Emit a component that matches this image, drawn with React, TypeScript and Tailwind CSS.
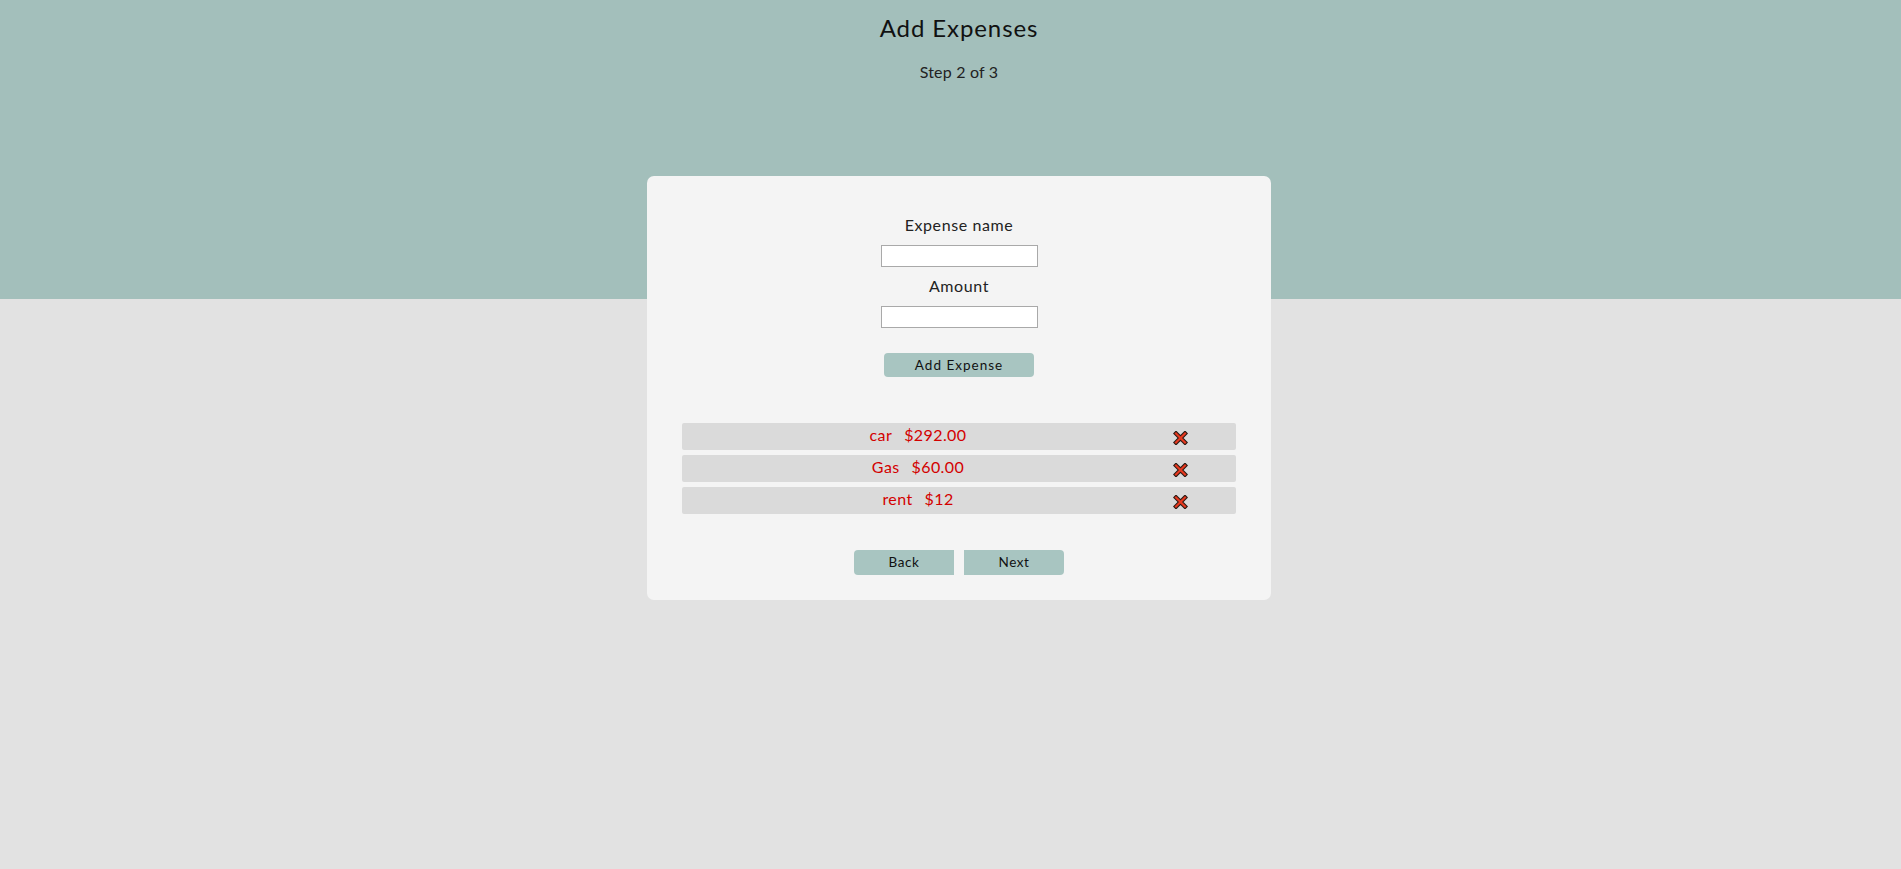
import React from "react";

const font = { fontFamily: '"Lato", "Noto Sans", sans-serif' };

function XIcon() {
  return (
    <svg width="15" height="14" viewBox="0 0 15 14" className="block">
      <g strokeLinecap="square">
        <path d="M3 2.5 L12 11.5 M12 2.5 L3 11.5" stroke="#2a1a14" strokeWidth="4.4" />
        <path d="M3 2.5 L12 11.5 M12 2.5 L3 11.5" stroke="#e8391f" strokeWidth="2.2" />
      </g>
    </svg>
  );
}

const expenses = [
  { name: "car", amount: "$292.00" },
  { name: "Gas", amount: "$60.00" },
  { name: "rent", amount: "$12" },
];

export default function App() {
  return (
    <div
      className="min-h-screen w-full bg-[linear-gradient(to_bottom,#a3bfbb_299px,#e2e2e2_299px)] pl-[17px] text-[#111]"
      style={font}
    >
      <div className="flex flex-col items-center">
        <h1 className="mt-[12px] text-[24px] leading-[32px] font-normal tracking-[0.9px] text-[#111]">Add Expenses</h1>
        <p className="mt-[16px] text-[16px] leading-[24px] tracking-[0.2px] text-[#222]">Step 2 of 3</p>

        <div className="mt-[92px] flex w-[624px] flex-col items-center rounded-[7px] bg-[#f4f4f4] pt-[37px] pb-[25px]">
          <label className="text-[16px] leading-[24px] tracking-[0.6px] text-[#222]">Expense name</label>
          <input
            type="text"
            className="mt-[8px] h-[22px] w-[157px] border border-[#a9a9a9] bg-white px-1 text-[13px] outline-none"
          />
          <label className="mt-[7px] text-[16px] leading-[24px] tracking-[0.6px] text-[#222]">Amount</label>
          <input
            type="text"
            className="mt-[8px] h-[22px] w-[157px] border border-[#a9a9a9] bg-white px-1 text-[13px] outline-none"
          />
          <button className="mt-[25px] h-[24px] w-[150px] rounded-[4px] bg-[#a8c5c1] text-[13.5px] leading-[24px] tracking-[1px] text-[#111]">
            Add Expense
          </button>

          <div className="mt-[46px] flex w-[554px] flex-col gap-[5px]">
            {expenses.map((e) => (
              <div key={e.name} className="flex h-[27px] items-center rounded-[2px] bg-[#dadada]">
                <div className="flex w-[472px] justify-center gap-[12px] pb-[4px] text-[16px] leading-[20px] tracking-[0.4px] text-[#d30000]">
                  <span>{e.name}</span>
                  <span>{e.amount}</span>
                </div>
                <div className="ml-[19px] pt-[2px]">
                  <XIcon />
                </div>
              </div>
            ))}
          </div>

          <div className="mt-[36px] flex gap-[10px]">
            <button className="h-[25px] w-[100px] rounded-l-[4px] bg-[#a8c5c1] text-[13.5px] tracking-[0.6px] text-[#111]">Back</button>
            <button className="h-[25px] w-[100px] rounded-r-[4px] bg-[#a8c5c1] text-[13.5px] tracking-[0.6px] text-[#111]">Next</button>
          </div>
        </div>
      </div>
    </div>
  );
}
